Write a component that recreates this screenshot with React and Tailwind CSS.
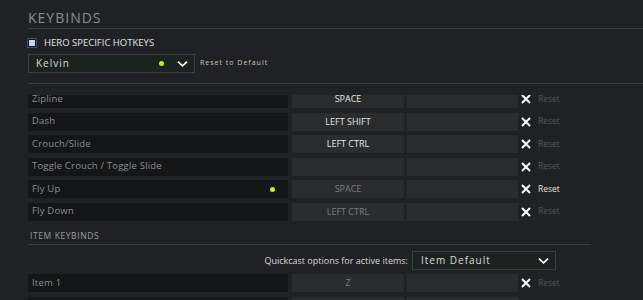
import React from 'react'

const FONT = { fontFamily: '"Open Sans", "Noto Sans", sans-serif' }

const rows = [
  { label: 'Zipline', key: 'SPACE', custom: true },
  { label: 'Dash', key: 'LEFT SHIFT', custom: true },
  { label: 'Crouch/Slide', key: 'LEFT CTRL', custom: true },
  { label: 'Toggle Crouch / Toggle Slide', key: '', custom: true },
  { label: 'Fly Up', key: 'SPACE', custom: false, dot: true, active: true },
  { label: 'Fly Down', key: 'LEFT CTRL', custom: false },
]

const Chevron = ({ className }) => (
  <svg viewBox="0 0 12 8" className={className} fill="none" stroke="currentColor" strokeWidth="1.8">
    <path d="M1 1.5 L6 6 L11 1.5" />
  </svg>
)

const Cross = () => (
  <svg viewBox="0 0 10 10" className="w-[10px] h-[10px] text-white" fill="none" stroke="currentColor" strokeWidth="2">
    <path d="M1 1 L9 9 M9 1 L1 9" />
  </svg>
)

const Row = ({ label, keyName, custom, dot, active }) => (
  <div className="flex items-center h-[18px] shrink-0">
    <div className="w-[260px] h-full bg-[#141516] flex items-center justify-between pl-[4px] pr-[13px]">
      <span className="text-[9.5px] text-[#8d8f91] tracking-[0.2px]">{label}</span>
      {dot && <span className="w-[5px] h-[5px] rounded-full bg-[#b6f227]" />}
    </div>
    <div className={`ml-[4px] w-[112px] h-full bg-[#2a2c2e] flex items-center justify-center text-[9px] ${custom ? 'text-[#e4e4e4]' : 'text-[#7c7e80]'}`}>
      {keyName}
    </div>
    <div className="ml-[3px] w-[111px] h-full bg-[#2a2c2e]" />
    <div className="ml-[3px] flex items-center">
      <Cross />
    </div>
    <span className={`ml-[7px] text-[8.5px] ${active ? 'text-[#e8e2da]' : 'text-[#56585a]'}`}>Reset</span>
  </div>
)

export default function App() {
  return (
    <div className="w-[643px] h-[300px] bg-[#202124] overflow-hidden pl-[28px]" style={FONT}>
      <div className="pt-[9px] h-[28px] text-[14px] leading-[18px] tracking-[1px] text-[#8a8d90]">KEYBINDS</div>
      <div className="h-[1px] bg-[#3b3c3e]" />

      <div className="mt-[9px] flex items-center h-[10px] -ml-[1px]">
        <div className="w-[10px] h-[10px] border border-[#4a4a7a] bg-[#15152a] p-[1px]">
          <div className="w-full h-full bg-[#c4dcdc]" />
        </div>
        <span className="ml-[7px] text-[9.5px] text-[#e2e2e2]">HERO SPECIFIC HOTKEYS</span>
      </div>

      <div className="mt-[6px] flex items-center">
        <div className="w-[167px] h-[19px] bg-[#1c2220] border border-[#394140] flex items-center pl-[7px] pr-[6px]">
          <span className="text-[10px] text-[#dcdcd6] tracking-[1px] flex-1">Kelvin</span>
          <span className="w-[5px] h-[5px] rounded-full bg-[#b6f227]" />
          <Chevron className="ml-[13px] w-[11px] h-[8px] text-white" />
        </div>
        <span className="ml-[5px] text-[7px] tracking-[1px] text-[#cfc6bd]">Reset to Default</span>
      </div>

      <div className="mt-[10px] h-[1px] bg-[#3b3c3e]" />

      <div className="mt-[11px] h-[126px] overflow-hidden">
        <div className="-mt-[5px] flex flex-col gap-[4.5px]">
          {rows.map((r) => (
            <Row key={r.label} label={r.label} keyName={r.key} custom={r.custom} dot={r.dot} active={r.active} />
          ))}
        </div>
      </div>

      <div className="mt-[9px] pl-[2px] text-[8.5px] leading-[12px] tracking-[0.6px] text-[#9a9c9e]">ITEM KEYBINDS</div>
      <div className="mt-[2px] w-[563px] h-[1px] bg-[#3b3c3e]" />

      <div className="mt-[6px] flex items-center justify-end w-[528px]">
        <span className="text-[9px] text-[#ddd6cf] mr-[4px]">Quickcast options for active items:</span>
        <div className="w-[144px] h-[19px] bg-[#1c2220] border border-[#394140] flex items-center pl-[8px] pr-[6px]">
          <span className="text-[10px] text-[#dcdcd6] tracking-[1px] flex-1">Item Default</span>
          <Chevron className="w-[11px] h-[8px] text-white" />
        </div>
      </div>

      <div className="mt-[4px] flex flex-col gap-[4.5px]">
        <Row label="Item 1" keyName="Z" custom={false} />
        <Row label="Item 2" keyName="X" custom={false} />
      </div>
    </div>
  )
}
